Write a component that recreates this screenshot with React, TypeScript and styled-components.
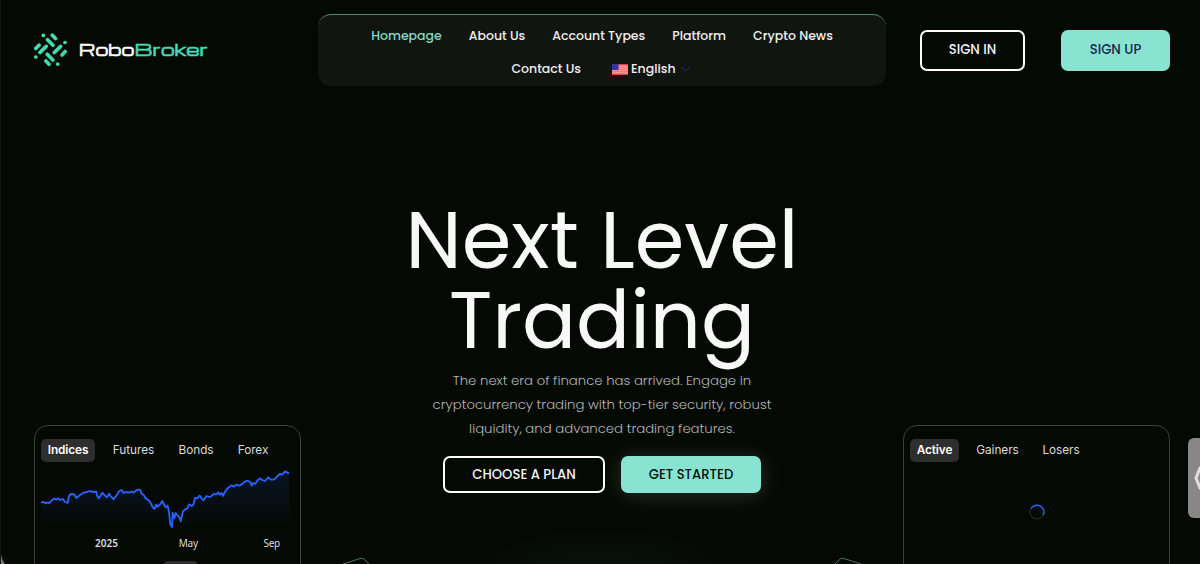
import React, { useState } from 'react';
import styled, { createGlobalStyle } from 'styled-components';

const GlobalStyle = createGlobalStyle`
    * {
        box-sizing: border-box;
    }
    body {
        margin: 0;
        background: #040903;
        font-family: Poppins, Inter, 'Liberation Sans', sans-serif;
    }
    button {
        font-family: inherit;
        cursor: pointer;
    }
`;

const Page = styled.div`
    position: relative;
    height: 564px;
    padding: 14px 30px 0 33px;
    overflow: hidden;
    border-left: 1px solid #10150f;
    background: radial-gradient(ellipse 140px 55px at 601px 580px, #0c130d, #040903);
    color: #fff;
`;

const Header = styled.header`
    display: grid;
    grid-template-columns: 284px 568px 1fr;
    height: 72px;
`;

const Logo = styled.a`
    display: flex;
    align-items: center;
    font-family: Michroma, Orbitron, Poppins, Inter, sans-serif;
`;

const Nav = styled.nav`
    display: flex;
    flex-direction: column;
    align-items: center;
    height: 72px;
    padding-top: 4px;
    border-radius: 13px;
    border-top: 1px solid #4b8a7c;
    background: #111510;
`;

const NavRow = styled.div<{ $gap: number }>`
    display: flex;
    align-items: center;
    gap: ${({ $gap }) => $gap}px;
    height: 33.8px;
`;

const NavLink = styled.a<{ $active?: boolean }>`
    white-space: nowrap;
    font-size: 12.5px;
    font-weight: 500;
    color: ${({ $active }) => ($active ? '#80d9c6' : '#f0f0f0')};
`;

const Language = styled.div`
    display: flex;
    align-items: center;
    gap: 3px;
`;

const Actions = styled.div`
    display: flex;
    justify-content: space-between;
    padding: 15.5px 0 0 34px;
`;

const Button = styled.button<{ $w: number; $h: number; $filled?: boolean; $ink?: string; $glow?: boolean }>`
    width: ${({ $w }) => $w}px;
    height: ${({ $h }) => $h}px;
    padding: 0;
    border-radius: 7px;
    border: ${({ $filled }) => ($filled ? 'none' : '2px solid #fff')};
    background: ${({ $filled }) => ($filled ? '#88e3d1' : 'transparent')};
    color: ${({ $ink }) => $ink || '#f4f4f4'};
    font-size: 13.2px;
    font-weight: 500;
    white-space: nowrap;
    box-shadow: ${({ $glow }) => ($glow ? '0 2px 22px rgba(255, 255, 255, 0.16)' : 'none')};
`;

const Main = styled.main`
    display: grid;
    grid-template-columns: 267px 1fr 267px;
    height: 478px;
`;

const Hero = styled.section`
    display: flex;
    flex-direction: column;
    align-items: center;
    padding-top: 114px;
`;

const Title = styled.h1`
    display: flex;
    flex-direction: column;
    align-items: center;
    margin: 0;
    font-size: 80px;
    line-height: 80px;
    font-weight: 400;
    color: #f8f8f8;
`;

const Line = styled.span`
    white-space: nowrap;
`;

const Lead = styled.p`
    display: flex;
    flex-direction: column;
    align-items: center;
    margin: 8.7px 0 0;
    font-size: 13.25px;
    line-height: 24px;
    font-weight: 300;
    color: #b4b7b4;
`;

const HeroButtons = styled.div`
    display: flex;
    gap: 16px;
    margin-top: 15.8px;
`;

const Card = styled.section`
    margin-top: 339px;
    height: 160px;
    padding: 12.6px 6px 0;
    border: 1px solid #3d403d;
    border-radius: 14px;
    font-family: Inter, 'Liberation Sans', sans-serif;
`;

const Tabs = styled.div`
    display: flex;
    gap: 12px;
`;

const Tab = styled.button<{ $active?: boolean; $w: number }>`
    width: ${({ $w }) => $w}px;
    height: 23.4px;
    padding: 0;
    border: none;
    border-radius: 5px;
    background: ${({ $active }) => ($active ? '#2e2e2e' : 'transparent')};
    color: ${({ $active }) => ($active ? '#fff' : '#dbdbdb')};
    font-size: 11.8px;
    font-weight: ${({ $active }) => ($active ? 600 : 400)};
    letter-spacing: ${({ $active }) => ($active ? -0.1 : -0.05)}px;
`;

const Chart = styled.svg`
    display: block;
    width: 248px;
    height: 60px;
    margin-top: 8px;
    overflow: visible;
`;

const Months = styled.div`
    display: flex;
    justify-content: space-between;
    padding: 6px 9px 0 54px;
    font-family: 'Noto Sans', 'Open Sans', sans-serif;
    font-size: 10px;
    line-height: 14px;
    letter-spacing: -0.3px;
    color: #dbdbdb;

    b {
        font-weight: 600;
        letter-spacing: 0;
    }
    span:nth-child(2) {
        margin-right: 5px;
    }
    span:last-child {
        margin-right: 5px;
    }
`;

const RangePill = styled.div`
    width: 35px;
    height: 20px;
    margin: 11px 0 0 122px;
    border-radius: 5px;
    background: #2e2e2e;
`;

const Loading = styled.div`
    display: flex;
    justify-content: center;
    padding-top: 42px;
`;

const SideHandle = styled.div`
    position: absolute;
    top: 438px;
    right: 0;
    width: 12px;
    height: 80px;
    padding-top: 27px;
    padding-left: 5px;
    overflow: hidden;
    border-radius: 6px 0 0 6px;
    background: #898687;
`;

const Overlay = styled.svg<{ $left: number }>`
    position: absolute;
    bottom: 0;
    left: ${({ $left }) => $left}px;
`;

// chart points, three units to the pixel
const points =
    '0,97 8,96 14,100 20,97 24,100 32,92 38,86 46,88 52,85 58,90 66,87 72,96 80,99 84,78 90,72 100,73 106,84 116,76 128,68 138,66 146,63 156,66 166,65 168,77 174,85 184,68 190,75 198,82 204,71 210,80 218,88 228,74 234,64 242,60 248,69 254,66 264,68 272,65 278,68 284,62 292,59 298,60 302,72 308,75 314,85 320,88 328,97 334,110 340,117 346,104 350,110 358,102 364,93 370,106 374,112 380,107 384,126 388,163 393,171 395,128 400,145 404,129 410,137 415,142 419,154 426,124 434,117 440,115 444,103 452,108 458,102 462,84 470,84 476,77 482,85 488,91 496,78 504,81 510,79 518,72 526,73 532,67 536,74 542,69 546,78 552,65 558,57 564,51 572,46 578,50 586,44 594,47 602,43 610,36 618,32 628,36 632,47 636,39 642,42 650,31 658,25 664,30 672,33 682,22 690,29 700,28 708,20 716,12 724,13 732,4 738,7 744,10';

const strokes = [
    [52.3, 2.2, 55.5, 5.5],
    [47.5, 6.7, 53, 12.2],
    [35.8, 15.5, 39, 12.2],
    [40, 19.5, 46.2, 13.4],
    [54.3, 19.5, 60.6, 13.4],
    [62, 22, 65.2, 18.5],
    [47.2, 21.2, 52.9, 27],
    [45.9, 28, 49, 31.2],
    [43.3, 2.4, 43.3, 2.4],
    [65, 9.5, 65, 9.5],
    [35.8, 24, 35.8, 24],
    [57.7, 31.1, 57.7, 31.1],
];

const LogoMark = () => (
    <svg width="178" height="36" viewBox="34 0 178 36">
        <defs>
            <linearGradient id="mark" x1="33" y1="0" x2="67" y2="34" gradientUnits="userSpaceOnUse">
                <stop offset="0" stopColor="#4be0b5" />
                <stop offset="1" stopColor="#36d3ad" />
            </linearGradient>
        </defs>
        {strokes.map(([x1, y1, x2, y2], i) => (
            <path key={i} d={`M${x1} ${y1 + 1}L${x2 + 0.01} ${y2 + 1}`} stroke="url(#mark)" strokeWidth="3.7" strokeLinecap="round" />
        ))}
        <text x="78.8" y="24" fontSize="15.3" fill="#fff" stroke="#fff" strokeWidth="0.6" textLength="55.5" lengthAdjust="spacingAndGlyphs">
            Robo
        </text>
        <text x="134.5" y="24" fontSize="15.3" fill="#45dcb3" stroke="#45dcb3" strokeWidth="0.6" textLength="73.5" lengthAdjust="spacingAndGlyphs">
            Broker
        </text>
    </svg>
);

const Flag = () => (
    <svg width="16" height="11" viewBox="0 0 16 11">
        <rect width="16" height="11" fill="#f27878" />
        <path d="M0 2.5h16M0 4.5h16M0 6.5h16M0 8.5h16" stroke="#ff9a98" strokeWidth="0.8" />
        <path d="M0 .5h16M0 10.5h16" stroke="#d94444" />
        <rect width="6.5" height="6" fill="#34349a" />
    </svg>
);

const App: React.FC = () => {
    const [market, setMarket] = useState('Indices');
    const [movers, setMovers] = useState('Active');

    return (
        <>
            <GlobalStyle />
            <Page>
                <Header>
                    <Logo>
                        <LogoMark />
                    </Logo>
                    <Nav>
                        <NavRow $gap={27}>
                            <NavLink $active>Homepage</NavLink>
                            <NavLink>About Us</NavLink>
                            <NavLink>Account Types</NavLink>
                            <NavLink>Platform</NavLink>
                            <NavLink>Crypto News</NavLink>
                        </NavRow>
                        <NavRow $gap={31}>
                            <NavLink>Contact Us</NavLink>
                            <Language>
                                <Flag />
                                <NavLink>English</NavLink>
                                <svg width="14" height="8" viewBox="0 0 14 8" fill="none">
                                    <path d="M2 2l4.5 4L11 2" stroke="#2c2a68" />
                                </svg>
                            </Language>
                        </NavRow>
                    </Nav>
                    <Actions>
                        <Button $w={105} $h={41}>SIGN IN</Button>
                        <Button $w={109} $h={41} $filled $ink="#1c2752">SIGN UP</Button>
                    </Actions>
                </Header>
                <Main>
                    <Card>
                        <Tabs>
                            {[['Indices', 54], ['Futures', 53], ['Bonds', 48], ['Forex', 42]].map(([name, w]) => (
                                <Tab key={name} $w={w as number} $active={market === name} onClick={() => setMarket(name as string)}>
                                    {name}
                                </Tab>
                            ))}
                        </Tabs>
                        <Chart viewBox="0 0 744 180">
                            <defs>
                                <linearGradient id="area" x1="0" y1="0" x2="0" y2="1">
                                    <stop offset="0" stopColor="#2962ff" stopOpacity="0.14" />
                                    <stop offset="1" stopColor="#2962ff" stopOpacity="0" />
                                </linearGradient>
                            </defs>
                            <polygon points={`${points} 744,180 0,180`} fill="url(#area)" />
                            <polyline points={points} fill="none" stroke="#2962ff" strokeWidth="5.5" strokeLinejoin="round" />
                        </Chart>
                        <Months>
                            <b>2025</b>
                            <span>May</span>
                            <span>Sep</span>
                        </Months>
                        <RangePill />
                    </Card>
                    <Hero>
                        <Title>
                            <Line>Next Level</Line>
                            <Line>Trading</Line>
                        </Title>
                        <Lead>
                            <Line>The next era of finance has arrived. Engage in</Line>
                            <Line>cryptocurrency trading with top-tier security, robust</Line>
                            <Line>liquidity, and advanced trading features.</Line>
                        </Lead>
                        <HeroButtons>
                            <Button $w={162} $h={37}>CHOOSE A PLAN</Button>
                            <Button $w={140} $h={37} $filled $glow $ink="#06120d">GET STARTED</Button>
                        </HeroButtons>
                    </Hero>
                    <Card>
                        <Tabs>
                            {[['Active', 49], ['Gainers', 53], ['Losers', 50]].map(([name, w]) => (
                                <Tab key={name} $w={w as number} $active={movers === name} onClick={() => setMovers(name as string)}>
                                    {name}
                                </Tab>
                            ))}
                        </Tabs>
                        <Loading>
                            <svg width="16" height="16" viewBox="0 0 16 16" fill="none">
                                <circle cx="8" cy="8" r="7" stroke="#303230" />
                                <path d="M2 4.4A7 7 0 0 1 14.2 11.2" stroke="#2962ff" strokeWidth="1.5" />
                            </svg>
                        </Loading>
                    </Card>
                </Main>
                <SideHandle>
                    <svg width="14" height="26" viewBox="0 0 14 26" fill="none">
                        <path d="M9 3H7L3 13l4 10h2" stroke="#dedede" strokeWidth="3" />
                    </svg>
                </SideHandle>
                <Overlay $left={340} width="34" height="8" viewBox="0 0 34 8" fill="none">
                    <path d="M2 8L19 2.5Q22 1.5 24 4l4 4" stroke="#44716a" />
                </Overlay>
                <Overlay $left={829} width="34" height="8" viewBox="0 0 34 8" fill="none">
                    <path d="M5 8l4-4Q11 1.5 14 2.5L31 8" stroke="#44716a" />
                </Overlay>
                <Overlay $left={-1} width="5" height="20" viewBox="0 0 5 20">
                    <path d="M0 0Q.5 15 5 20H0Z" fill="#77797a" />
                </Overlay>
            </Page>
        </>
    );
};

export default App;
